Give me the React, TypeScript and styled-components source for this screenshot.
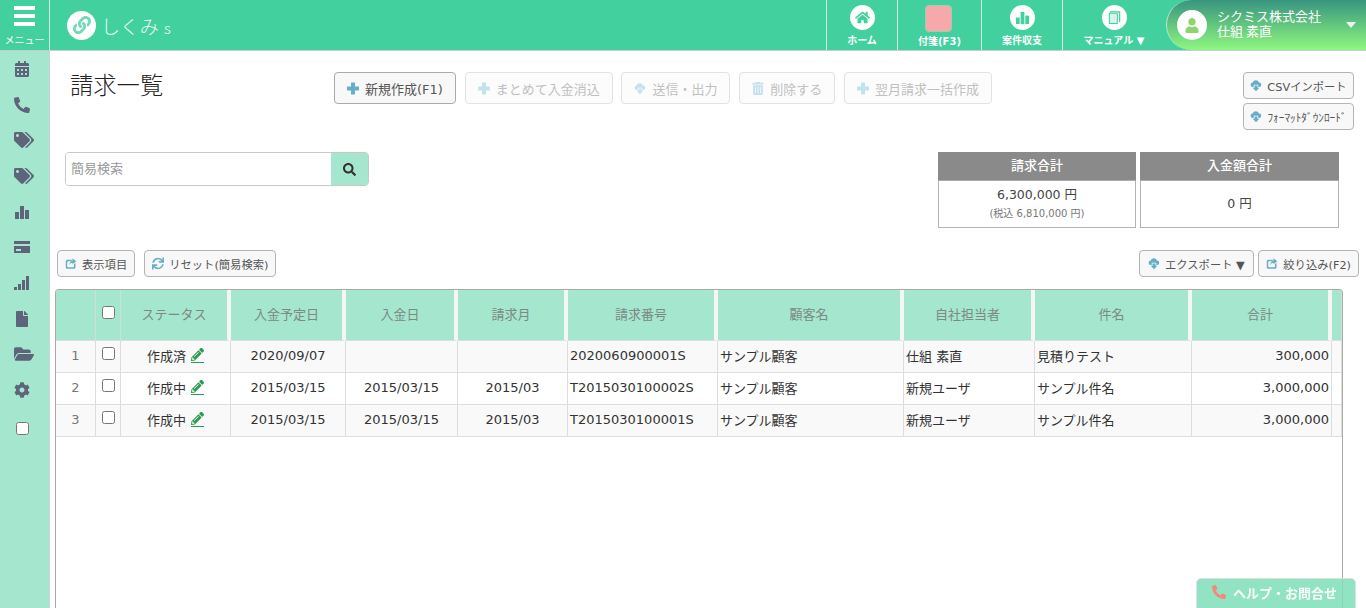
import React from "react";
import styled, { createGlobalStyle } from "styled-components";
import {
  FaCalendarAlt, FaPhoneAlt, FaTags, FaFile, FaFolderOpen, FaCog,
  FaTrashAlt, FaSync, FaHome, FaPencilAlt, FaSearch, FaUser, FaLink,
} from "react-icons/fa";

const font = `"DejaVu Sans", "Noto Sans CJK JP", sans-serif`;
const cjk = `"Noto Sans CJK JP", "DejaVu Sans", sans-serif`;
const green = "#43d09f";
const mint = "#a5e6cf";

const GlobalStyle = createGlobalStyle`
  html, body { margin: 0; height: 100%; overflow: hidden; background: #fff; }
  body { font-family: ${font}; color: #333; }
  * { box-sizing: border-box; }
`;

const Page = styled.div`
  display: flex;
  flex-direction: column;
  width: 1366px;
  height: 608px;
  overflow: hidden;
`;

const Header = styled.header`
  display: flex;
  flex: none;
  height: 51px;
  background: ${green};
  border-bottom: 1px solid #c4cfca;
  color: #fff;
`;

const MenuButton = styled.div`
  display: flex;
  flex: none;
  flex-direction: column;
  align-items: center;
  width: 50px;
  padding-top: 6px;
  border-right: 1px solid #d5f3e8;
  font-family: ${cjk};
  font-size: 10px;
  line-height: 12px;
  svg { width: 21px; height: 20px; margin-bottom: 8px; }
`;

const Logo = styled.div`
  display: flex;
  align-items: center;
  gap: 5px;
  margin-left: 17px;
  font-family: ${cjk};
  font-size: 19px;
  font-weight: 300;
  color: #e9faf4;
`;

const LogoSuffix = styled.span`
  margin-left: 2px;
  font-size: 15px;
`;

const LogoMark = styled.span`
  display: flex;
  align-items: center;
  justify-content: center;
  width: 29px;
  height: 29px;
  border-radius: 50%;
  background: #fff;
  color: #6fdab5;
  svg { width: 18px; height: 18px; }
`;

const Nav = styled.nav`
  display: flex;
  margin-left: auto;
`;

const NavItem = styled.div<{ $width: number }>`
  display: flex;
  flex-direction: column;
  align-items: center;
  width: ${(p) => p.$width}px;
  padding-top: 5px;
  border-left: 1px solid #d5f3e8;
  font-size: 10px;
  font-weight: 700;
  line-height: 12px;
`;

const NavCircle = styled.span`
  display: flex;
  align-items: center;
  justify-content: center;
  width: 25px;
  height: 25px;
  margin-bottom: 5px;
  border-radius: 50%;
  background: #fff;
  color: ${green};
  svg { width: 15px; height: 15px; }
`;

const StickyNote = styled.span`
  display: block;
  width: 27px;
  height: 27px;
  margin: 0 3px 4px 0;
  border-radius: 4px;
  background: #f5a9ab;
  border: 1px solid #a9c8b4;
`;

const UserPill = styled.div`
  display: flex;
  flex: none;
  align-items: center;
  width: 200px;
  margin-left: 1px;
  padding-left: 10px;
  border-radius: 26px 0 0 26px;
  border-left: 1px solid #b9e6d6;
  background: linear-gradient(#38957f, #8ef77e);
  font-family: ${cjk};
  font-size: 13px;
  line-height: 15px;
`;

const UserName = styled.div`
  margin-bottom: 4px;
`;

const Avatar = styled.span`
  display: flex;
  flex: none;
  align-items: center;
  justify-content: center;
  width: 30px;
  height: 30px;
  margin-right: 10px;
  border-radius: 50%;
  background: #fff;
  color: #8ed46f;
  svg { width: 14px; height: 15px; }
`;

const Caret = styled.span`
  margin: 0 10px 0 auto;
  width: 0;
  height: 0;
  border-left: 5px solid transparent;
  border-right: 5px solid transparent;
  border-top: 6px solid #e8f5ef;
`;

const Body = styled.div`
  display: flex;
  flex: 1;
  min-height: 0;
`;

const Sidebar = styled.aside`
  display: flex;
  flex: none;
  flex-direction: column;
  align-items: flex-start;
  width: 50px;
  padding-left: 14px;
  background: ${mint};
  border-right: 1px solid #c4d8d0;
  color: #5e6479;
`;

const SideIcon = styled.div<{ $size?: number }>`
  display: flex;
  align-items: center;
  height: 35.7px;
  svg { width: ${(p) => p.$size ?? 16}px; height: ${(p) => p.$size ?? 16}px; }
`;

const SideCheck = styled.input`
  width: 13px;
  height: 13px;
  margin: 14.5px 0 0 2px;
`;

const Main = styled.main`
  flex: 1;
  min-width: 0;
  padding: 21px 7px 0 5px;
`;

const TopRow = styled.div`
  display: flex;
  align-items: flex-start;
  height: 60px;
  margin-bottom: 20px;
`;

const Title = styled.h1`
  width: 279px;
  margin: 0;
  padding: 0 0 0 15px;
  font-family: ${cjk};
  font-size: 23.3px;
  font-weight: 300;
  line-height: 24px;
  color: #222;
`;

const Actions = styled.div`
  display: flex;
  gap: 8.75px;
`;

const ImportStack = styled.div`
  display: flex;
  flex-direction: column;
  gap: 4px;
  width: 111px;
  margin-left: auto;
  margin-right: 5px;
`;

const Button = styled.button<{ $off?: boolean }>`
  display: inline-flex;
  align-items: center;
  justify-content: center;
  gap: 6px;
  height: 32px;
  padding: 0 12px;
  border: 1px solid ${(p) => (p.$off ? "#e2e2e2" : "#aaa")};
  border-radius: 4px;
  background: ${(p) => (p.$off ? "#fcfcfc" : "#f8f8f8")};
  color: ${(p) => (p.$off ? "#c0c0c0" : "#555")};
  font-family: ${font};
  font-size: 13px;
  white-space: nowrap;
  svg { flex: none; width: 12px; height: 13px; color: ${(p) => (p.$off ? "#c4e2ec" : "#67aec9")}; }
`;

const SmallButton = styled(Button)`
  gap: 5px;
  height: 27px;
  padding: 0 7px;
  font-size: 11.3px;
  border-color: #b4b4b4;
`;

const ExportButton = styled(SmallButton)`
  padding: 0 8.5px;
`;

const SearchRow = styled.div`
  display: flex;
  align-items: flex-start;
  justify-content: space-between;
  height: 76px;
  margin-bottom: 22px;
  padding: 0 20px 0 10px;
`;

const SearchBox = styled.div`
  display: flex;
  width: 304px;
  height: 34px;
  border: 1px solid #c8c8c8;
  border-radius: 4px;
  overflow: hidden;
`;

const SearchInput = styled.input`
  flex: 1;
  min-width: 0;
  padding: 0 5px 3px;
  border: 0;
  outline: 0;
  font-family: ${cjk};
  font-size: 13px;
  &::placeholder { color: #999; }
`;

const SearchButton = styled.span`
  display: flex;
  flex: none;
  align-items: center;
  justify-content: center;
  width: 37px;
  background: ${mint};
  color: #333;
  svg { width: 13px; height: 13px; }
`;

const Totals = styled.div`
  display: flex;
  gap: 4px;
`;

const TotalCard = styled.div<{ $width: number }>`
  display: flex;
  flex-direction: column;
  width: ${(p) => p.$width}px;
  height: 76px;
  border: 1px solid #b4b4b4;
`;

const TotalHead = styled.div`
  height: 29px;
  margin: -1px -1px 0;
  padding-bottom: 2px;
  background: #8a8a8a;
  border-bottom: 1px solid #aaa;
  color: #fff;
  font-family: ${cjk};
  font-size: 13px;
  font-weight: 500;
  line-height: 26px;
  text-align: center;
`;

const TotalBody = styled.div`
  display: flex;
  flex: 1;
  flex-direction: column;
  align-items: center;
  justify-content: center;
  gap: 4px;
  font-size: 12.5px;
  line-height: 16px;
  color: #444;
`;

const TotalSub = styled.div`
  margin-bottom: 2px;
  font-size: 10px;
  line-height: 13px;
  color: #777;
`;

const ToolRow = styled.div`
  display: flex;
  justify-content: space-between;
  height: 27px;
  margin-bottom: 12px;
  padding-left: 2px;
`;

const ToolGroup = styled.div<{ $gap: number }>`
  display: flex;
  gap: ${(p) => p.$gap}px;
`;

const TableFrame = styled.div`
  width: 1288px;
  height: 400px;
  border: 1px solid #aaa;
  border-bottom: 0;
  border-radius: 4px 4px 0 0;
  overflow: hidden;
`;

const Table = styled.table`
  width: 1286px;
  table-layout: fixed;
  border-collapse: separate;
  border-spacing: 0;
`;

const Th = styled.th<{ $strip?: boolean }>`
  height: 51px;
  padding: 0 0 3px;
  background: ${mint};
  border-right: ${(p) => (p.$strip ? "4px solid #f5f5f5" : "1px solid #cfe0d9")};
  box-shadow: ${(p) => (p.$strip ? "1px 0 0 #ddd" : "none")};
  border-bottom: 1px solid #ddd;
  color: #7b8a84;
  font-family: ${cjk};
  font-size: 13px;
  font-weight: 400;
  text-align: center;
`;

const Tr = styled.tr<{ $odd: boolean }>`
  background: ${(p) => (p.$odd ? "#f9f9f9" : "#fff")};
`;

const Td = styled.td<{ $align?: string; $muted?: boolean }>`
  height: 32px;
  padding: 0 2px 3px;
  border-right: 1px solid #ddd;
  border-bottom: 1px solid #ddd;
  color: ${(p) => (p.$muted ? "#777" : "#333")};
  font-size: 13px;
  text-align: ${(p) => p.$align ?? "left"};
  white-space: nowrap;
  overflow: hidden;
`;

const Check = styled.input`
  width: 13px;
  height: 13px;
  margin: 0 0 4px;
`;

const EditMark = styled.span`
  display: inline-block;
  margin-left: 5px;
  width: 13px;
  height: 15px;
  border-bottom: 1px solid #2a9b4e;
  color: #2a9b4e;
  vertical-align: 0;
  line-height: 12px;
  svg { width: 13px; height: 13px; }
`;

const HelpButton = styled.div`
  position: fixed;
  right: 10px;
  bottom: -4px;
  display: flex;
  align-items: center;
  gap: 7px;
  width: 160px;
  height: 34px;
  padding: 0 0 6px 15px;
  border: 1px solid #e0e0e0;
  border-radius: 5px;
  background: rgba(124, 222, 184, 0.85);
  color: #fff;
  font-family: ${cjk};
  font-size: 13px;
  font-weight: 700;
  svg { width: 14px; height: 16px; color: #f5877c; }
`;

const MenuIcon = () => (
  <svg viewBox="0 0 21 20" fill="currentColor">
    <rect x="0" y="0" width="21" height="4" />
    <rect x="0" y="8" width="21" height="4" />
    <rect x="0" y="16" width="21" height="4" />
  </svg>
);

const BarsIcon = () => (
  <svg viewBox="0 0 16 16" fill="currentColor">
    <rect x="1" y="8" width="4" height="7" />
    <rect x="6" y="2" width="4" height="13" />
    <rect x="11" y="6" width="4" height="9" />
  </svg>
);

const CardIcon = () => (
  <svg viewBox="0 0 16 16" fill="currentColor">
    <path d="M0 2h16v3H0zM0 7h16v7H0zM2 10v2h5v-2z" fillRule="evenodd" />
  </svg>
);

const SignalIcon = () => (
  <svg viewBox="0 0 16 16" fill="currentColor">
    <rect x="0" y="12" width="3" height="3" />
    <rect x="4" y="9" width="3" height="6" />
    <rect x="8" y="5" width="3" height="10" />
    <rect x="12" y="1" width="3" height="14" />
  </svg>
);

const BookIcon = () => (
  <svg viewBox="0 0 16 16" fill="none" stroke="currentColor">
    <path d="M2.5 3.5h8.5v11H2.5z" fill="#d6f5ea" strokeWidth="1.1" />
    <path d="M3 2h10.5v11" strokeWidth="1.3" />
  </svg>
);

const PlusIcon = () => (
  <svg viewBox="0 0 15 15" fill="currentColor">
    <path d="M5 0h5v5h5v5h-5v5H5v-5H0V5h5z" />
  </svg>
);

const CloudIcon = () => (
  <svg viewBox="0 0 16 16" fill="currentColor">
    <path d="M5 10H4a3 3 0 0 1-.5-6A4.5 4.5 0 0 1 12 4a3 3 0 0 1 0 6h-1V7H5z" />
    <path d="M6 8h4v3h2.5L8 15.5 3.5 11H6z" />
  </svg>
);

const ShareIcon = () => (
  <svg viewBox="0 0 16 16" fill="currentColor">
    <path d="M3 3h6v2H4a1 1 0 0 0-1 1v6a1 1 0 0 0 1 1h7a1 1 0 0 0 1-1V9l2-2v6a2 2 0 0 1-2 2H3a2 2 0 0 1-2-2V5a2 2 0 0 1 2-2z" />
    <path d="M10 1l5 4-5 4V7c-2 0-3 1-4 3 0-3 1-5 4-6z" />
  </svg>
);

const columns = [
  { label: "", width: 40 },
  { label: "check", width: 25 },
  { label: "ステータス", width: 110, strip: true },
  { label: "入金予定日", width: 115, strip: true },
  { label: "入金日", width: 112, strip: true },
  { label: "請求月", width: 110, strip: true },
  { label: "請求番号", width: 150, strip: true },
  { label: "顧客名", width: 186, strip: true },
  { label: "自社担当者", width: 131, strip: true },
  { label: "件名", width: 157, strip: true },
  { label: "合計", width: 140, strip: true },
  { label: "", width: 10 },
];

const rows = [
  { no: 1, status: "作成済", due: "2020/09/07", paid: "", month: "", code: "2020060900001S", client: "サンプル顧客", owner: "仕組 素直", subject: "見積りテスト", total: "300,000" },
  { no: 2, status: "作成中", due: "2015/03/15", paid: "2015/03/15", month: "2015/03", code: "T2015030100002S", client: "サンプル顧客", owner: "新規ユーザ", subject: "サンプル件名", total: "3,000,000" },
  { no: 3, status: "作成中", due: "2015/03/15", paid: "2015/03/15", month: "2015/03", code: "T2015030100001S", client: "サンプル顧客", owner: "新規ユーザ", subject: "サンプル件名", total: "3,000,000" },
];

export default function App() {
  return (
    <Page>
      <GlobalStyle />
      <Header>
        <MenuButton>
          <MenuIcon />
          メニュー
        </MenuButton>
        <Logo>
          <LogoMark><FaLink /></LogoMark>
          <span>しくみ<LogoSuffix> s</LogoSuffix></span>
        </Logo>
        <Nav>
          <NavItem $width={71}><NavCircle><FaHome /></NavCircle>ホーム</NavItem>
          <NavItem $width={84}><StickyNote />付箋(F3)</NavItem>
          <NavItem $width={81}><NavCircle><BarsIcon /></NavCircle>案件収支</NavItem>
          <NavItem $width={103}><NavCircle><BookIcon /></NavCircle>マニュアル ▼</NavItem>
        </Nav>
        <UserPill>
          <Avatar><FaUser /></Avatar>
          <UserName>シクミス株式会社<br />仕組 素直</UserName>
          <Caret />
        </UserPill>
      </Header>
      <Body>
        <Sidebar>
          <SideIcon><FaCalendarAlt /></SideIcon>
          <SideIcon><FaPhoneAlt /></SideIcon>
          <SideIcon $size={20}><FaTags /></SideIcon>
          <SideIcon $size={20}><FaTags /></SideIcon>
          <SideIcon><BarsIcon /></SideIcon>
          <SideIcon><CardIcon /></SideIcon>
          <SideIcon><SignalIcon /></SideIcon>
          <SideIcon><FaFile /></SideIcon>
          <SideIcon $size={20}><FaFolderOpen /></SideIcon>
          <SideIcon><FaCog /></SideIcon>
          <SideCheck type="checkbox" />
        </Sidebar>
        <Main>
          <TopRow>
            <Title>請求一覧</Title>
            <Actions>
              <Button><PlusIcon />新規作成(F1)</Button>
              <Button $off><PlusIcon />まとめて入金消込</Button>
              <Button $off><CloudIcon />送信・出力</Button>
              <Button $off><FaTrashAlt />削除する</Button>
              <Button $off><PlusIcon />翌月請求一括作成</Button>
            </Actions>
            <ImportStack>
              <SmallButton><CloudIcon />CSVインポート</SmallButton>
              <SmallButton><CloudIcon />ﾌｫｰﾏｯﾄﾀﾞｳﾝﾛｰﾄﾞ</SmallButton>
            </ImportStack>
          </TopRow>
          <SearchRow>
            <SearchBox>
              <SearchInput placeholder="簡易検索" />
              <SearchButton><FaSearch /></SearchButton>
            </SearchBox>
            <Totals>
              <TotalCard $width={198}>
                <TotalHead>請求合計</TotalHead>
                <TotalBody>
                  <div>6,300,000 円</div>
                  <TotalSub>(税込 6,810,000 円)</TotalSub>
                </TotalBody>
              </TotalCard>
              <TotalCard $width={199}>
                <TotalHead>入金額合計</TotalHead>
                <TotalBody><div>0 円</div></TotalBody>
              </TotalCard>
            </Totals>
          </SearchRow>
          <ToolRow>
            <ToolGroup $gap={9}>
              <SmallButton><ShareIcon />表示項目</SmallButton>
              <SmallButton><FaSync />リセット(簡易検索)</SmallButton>
            </ToolGroup>
            <ToolGroup $gap={4}>
              <ExportButton><CloudIcon />エクスポート ▼</ExportButton>
              <SmallButton><ShareIcon />絞り込み(F2)</SmallButton>
            </ToolGroup>
          </ToolRow>
          <TableFrame>
            <Table>
              <colgroup>
                {columns.map((c, i) => <col key={i} width={c.width} />)}
              </colgroup>
              <thead>
                <tr>
                  {columns.map((c, i) => (
                    <Th key={i} $strip={c.strip}>
                      {c.label === "check" ? <Check type="checkbox" /> : c.label}
                    </Th>
                  ))}
                </tr>
              </thead>
              <tbody>
                {rows.map((r) => (
                  <Tr key={r.no} $odd={r.no % 2 === 1}>
                    <Td $align="center" $muted>{r.no}</Td>
                    <Td $align="center"><Check type="checkbox" /></Td>
                    <Td $align="center">{r.status}<EditMark><FaPencilAlt /></EditMark></Td>
                    <Td $align="center">{r.due}</Td>
                    <Td $align="center">{r.paid}</Td>
                    <Td $align="center">{r.month}</Td>
                    <Td>{r.code}</Td>
                    <Td>{r.client}</Td>
                    <Td>{r.owner}</Td>
                    <Td>{r.subject}</Td>
                    <Td $align="right">{r.total}</Td>
                    <Td />
                  </Tr>
                ))}
              </tbody>
            </Table>
          </TableFrame>
        </Main>
      </Body>
      <HelpButton><FaPhoneAlt />ヘルプ・お問合せ</HelpButton>
    </Page>
  );
}
